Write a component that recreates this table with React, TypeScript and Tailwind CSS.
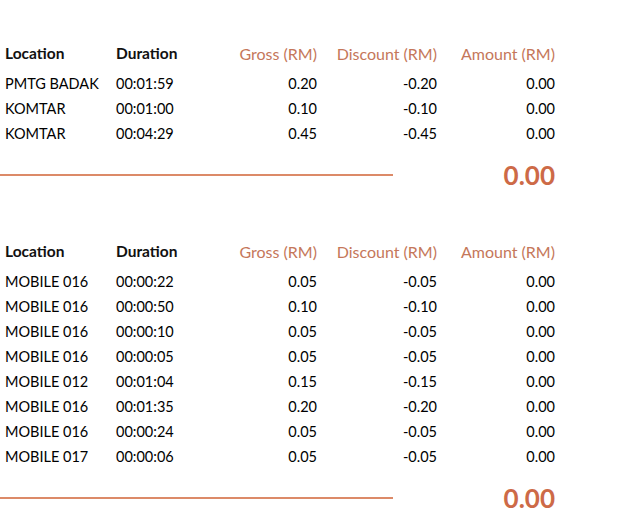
const sections = [
  {
    rows: [
      ['PMTG BADAK', '00:01:59', '0.20', '-0.20', '0.00'],
      ['KOMTAR', '00:01:00', '0.10', '-0.10', '0.00'],
      ['KOMTAR', '00:04:29', '0.45', '-0.45', '0.00'],
    ],
    total: '0.00',
  },
  {
    rows: [
      ['MOBILE 016', '00:00:22', '0.05', '-0.05', '0.00'],
      ['MOBILE 016', '00:00:50', '0.10', '-0.10', '0.00'],
      ['MOBILE 016', '00:00:10', '0.05', '-0.05', '0.00'],
      ['MOBILE 016', '00:00:05', '0.05', '-0.05', '0.00'],
      ['MOBILE 012', '00:01:04', '0.15', '-0.15', '0.00'],
      ['MOBILE 016', '00:01:35', '0.20', '-0.20', '0.00'],
      ['MOBILE 016', '00:00:24', '0.05', '-0.05', '0.00'],
      ['MOBILE 017', '00:00:06', '0.05', '-0.05', '0.00'],
    ],
    total: '0.00',
  },
];

const cols = 'grid grid-cols-[111px_90px_111px_120px_118px] pl-[5px] items-center';

function Section({ rows, total }: { rows: string[][]; total: string }) {
  return (
    <section>
      {/* Header */}
      <div className={`${cols} h-[25px] text-[15.5px]`}>
        <span className="font-bold text-[#111]">Location</span>
        <span className="font-bold text-[#111]">Duration</span>
        <span className="text-right text-[16px] text-[#c5775a]">Gross (RM)</span>
        <span className="text-right text-[16px] text-[#c5775a]">Discount (RM)</span>
        <span className="text-right text-[16px] text-[#c5775a]">Amount (RM)</span>
      </div>
      {/* Rows */}
      <div className="mt-[5px]">
        {rows.map((r, i) => (
          <div key={i} className={`${cols} h-[25px] text-[14.5px] text-black`}>
            <span className="whitespace-nowrap">{r[0]}</span>
            <span>{r[1]}</span>
            <span className="text-right">{r[2]}</span>
            <span className="text-right">{r[3]}</span>
            <span className="text-right">{r[4]}</span>
          </div>
        ))}
      </div>
      {/* Total */}
      <div className="flex items-center h-[30px] mt-[14px] w-[555px]">
        <div className="w-[393px] h-[2px] bg-[#dc8a68]" />
        <div className="ml-auto text-[26px] leading-none font-bold text-[#cd6a47]">{total}</div>
      </div>
    </section>
  );
}

export default function App() {
  return (
    <div className="bg-white min-h-[532px] pt-[41px] font-['Lato',sans-serif]">
      <Section {...sections[0]} />
      <div className="h-[49px]" />
      <Section {...sections[1]} />
    </div>
  );
}
